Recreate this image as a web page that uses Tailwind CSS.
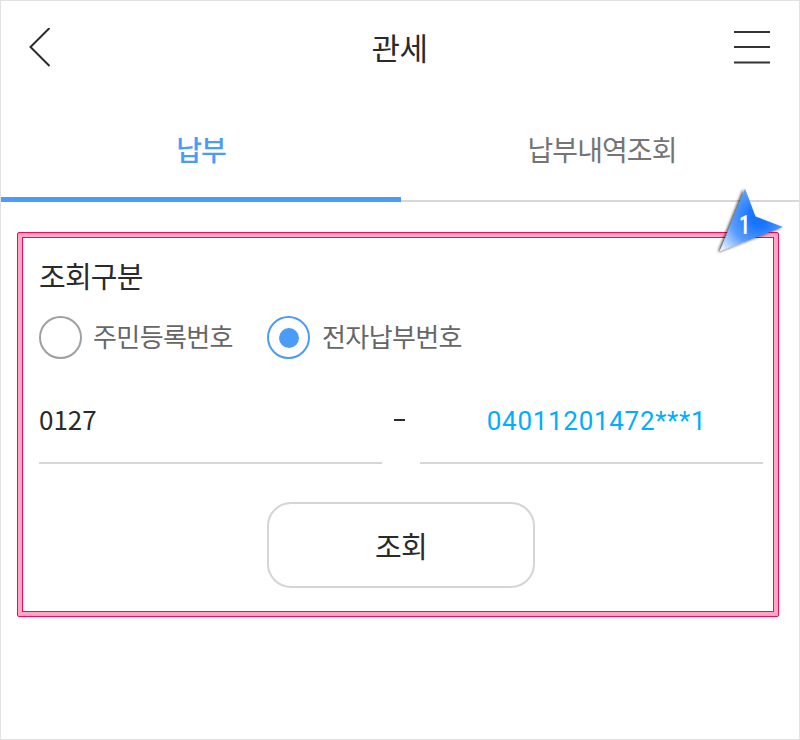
<!DOCTYPE html>
<html lang="ko">
<head>
  <meta charset="UTF-8">
  <meta name="viewport" content="width=device-width, initial-scale=1.0">
  <title>관세</title>
  <script src="https://cdn.jsdelivr.net/npm/@tailwindcss/browser@4"></script>
</head>
<body class="bg-white font-['Noto_Sans_CJK_KR','Noto_Sans',sans-serif] text-[#2a2a2a]">
  <div class="relative w-[800px] h-[740px] border border-[#e1e1e1] bg-white overflow-hidden">

    <header class="flex items-center justify-between h-24 pl-7 pr-[29px] pb-[3px]">
      <button class="w-10" aria-label="뒤로">
        <svg class="w-6 h-10" viewBox="0 0 24 40" fill="none" stroke="#2a2a2a" stroke-width="2">
          <path d="M20.5 0L1.500 19L20.5 38" />
        </svg>
      </button>
      <h1 class="text-[31px] leading-none tracking-[-0.4px] pb-0.5">관세</h1>
      <button class="w-10" aria-label="메뉴">
        <svg class="w-10 h-10" viewBox="0 0 40 40" fill="none" stroke="#333" stroke-width="2">
          <path d="M4 4H40M4 19H40M4 34.5H40" />
        </svg>
      </button>
    </header>

    <nav class="flex h-[105px] text-[28px] tracking-[-0.9px] leading-none text-center">
      <a class="w-[400px] pt-[38px] border-b-5 border-[#4b9cf8] text-[#4b9cf8] font-medium">납부</a>
      <a class="flex-1 pt-[38px] border-b-2 border-[#d7d7d7] text-[#757575] pl-1">납부내역조회</a>
    </nav>

    <main class="mt-[30px] ml-4 w-[762px] h-[385px] rounded-[2px] border border-[#ff0558] bg-[#ffa5c5] p-1">
      <div class="h-full border border-[#ff0558] bg-white pl-4 pr-[10px]">
        <h2 class="pt-[23px] text-[29px] leading-none tracking-[-0.8px]">조회구분</h2>

        <div class="flex items-center mt-[26px] h-[43px] text-[26px] leading-none tracking-[-0.6px] text-[#666]">
          <label class="flex items-center w-[228px] gap-[11px]">
            <span class="size-[43px] rounded-full border-2 border-[#a0a0a0]"></span>
            <span class="pb-1">주민등록번호</span>
          </label>
          <label class="flex items-center gap-3">
            <span class="size-[43px] rounded-full border-2 border-[#4b9cf8] flex items-center justify-center">
              <span class="size-5 rounded-full bg-[#4b9cf8]"></span>
            </span>
            <span class="pb-1">전자납부번호</span>
          </label>
        </div>

        <div class="flex mt-[23px] h-[82px] text-[26px]">
          <div class="w-[343px] border-b-2 border-[#d5d6d5] leading-[74px]">0127</div>
          <div class="flex-1 flex justify-center pt-[37px] pr-[3px]"><span class="w-[11px] h-0.5 bg-[#2a2a2a]"></span></div>
          <div class="w-[343px] border-b-2 border-[#d5d6d5] leading-[78px] text-center text-[#00aeff] font-[Roboto,sans-serif] tracking-[0.7px] pl-[10px]">04011201472***1</div>
        </div>

        <button class="block mx-auto mt-[38px] w-[268px] h-[86px] rounded-[24px] border-2 border-[#d5d5d5] text-[29px] leading-none tracking-[-0.8px]">조회</button>
      </div>
    </main>

    <!-- callout marker over the corner of the form -->
    <svg class="absolute left-[709px] top-[179px] w-[80px] h-[80px]" viewBox="710 180 80 80">
      <defs>
        <radialGradient id="marker" gradientUnits="userSpaceOnUse" cx="759" cy="217" r="52">
          <stop offset="0" stop-color="#0f70ff" />
          <stop offset="0.2" stop-color="#1c78ff" />
          <stop offset="0.55" stop-color="#5c9eff" />
          <stop offset="1" stop-color="#fff" />
        </radialGradient>
        <filter id="shadow" x="-20%" y="-20%" width="140%" height="140%">
          <feDropShadow dx="-2" dy="1" stdDeviation="1.5" flood-color="#000" flood-opacity="0.75" />
        </filter>
      </defs>
      <path d="M745 188.500L755.500 216.500L783 227L720 251Z" fill="url(#marker)" filter="url(#shadow)" />
      <text x="744.500" y="234" text-anchor="middle" font-family="Roboto" font-size="26" font-weight="700" fill="#fff" textLength="11" lengthAdjust="spacingAndGlyphs">1</text>
    </svg>
  </div>
</body>
</html>
